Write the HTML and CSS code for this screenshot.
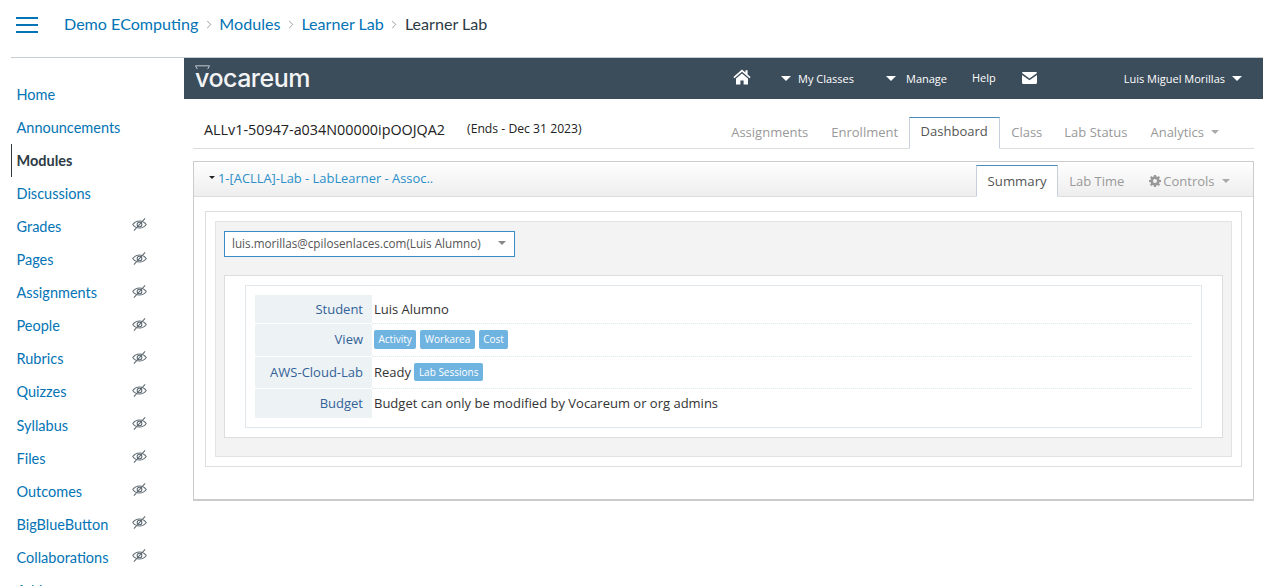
FILE: index.html
```html
<!DOCTYPE html>
<html lang="en">
<head>
    <meta charset="UTF-8">
    <title>Learner Lab</title>
    <link rel="stylesheet" href="styles.css">
</head>
<body>
    <!-- Canvas header -->
    <header class="top">
        <div class="burger"><span></span><span></span><span></span></div>
        <nav class="crumbs">
            <a>Demo EComputing</a>
            <svg class="sep" viewBox="0 0 6 10"><path d="M1 1l4 4-4 4" /></svg>
            <a>Modules</a>
            <svg class="sep" viewBox="0 0 6 10"><path d="M1 1l4 4-4 4" /></svg>
            <a>Learner Lab</a>
            <svg class="sep" viewBox="0 0 6 10"><path d="M1 1l4 4-4 4" /></svg>
            <span>Learner Lab</span>
        </nav>
    </header>

    <div class="layout">
        <!-- Course menu -->
        <ul class="side">
            <li><a>Home</a></li>
            <li><a>Announcements</a></li>
            <li class="active"><a>Modules</a></li>
            <li><a>Discussions</a></li>
            <li><a>Grades</a><svg class="eye"><use href="#eye-off" /></svg></li>
            <li><a>Pages</a><svg class="eye"><use href="#eye-off" /></svg></li>
            <li><a>Assignments</a><svg class="eye"><use href="#eye-off" /></svg></li>
            <li><a>People</a><svg class="eye"><use href="#eye-off" /></svg></li>
            <li><a>Rubrics</a><svg class="eye"><use href="#eye-off" /></svg></li>
            <li><a>Quizzes</a><svg class="eye"><use href="#eye-off" /></svg></li>
            <li><a>Syllabus</a><svg class="eye"><use href="#eye-off" /></svg></li>
            <li><a>Files</a><svg class="eye"><use href="#eye-off" /></svg></li>
            <li><a>Outcomes</a><svg class="eye"><use href="#eye-off" /></svg></li>
            <li><a>BigBlueButton</a><svg class="eye"><use href="#eye-off" /></svg></li>
            <li><a>Collaborations</a><svg class="eye"><use href="#eye-off" /></svg></li>
            <li><a>Add-ons</a></li>
        </ul>

        <main class="frame">
            <!-- Vocareum navbar -->
            <div class="navbar">
                <div class="logo">
                    <svg class="logo-mark" viewBox="0 0 16 5"><path d="M0.5 0.7h15M0.5 0.7l2 3.5M15.5 0.7l-2 3.5" /></svg>
                    <span>vocareum</span>
                </div>
                <svg class="home" viewBox="0 0 18 16"><path d="M9 .6L.4 8l1 1.2L9 2.8l7.6 6.4 1-1.2-3-2.6V1.2h-2.2v2.2zM3 9.6V15.6h4.4v-4.2h3.2v4.2H15V9.6L9 4.4z" /></svg>
                <div class="nav-item my-classes"><i class="caret"></i>My Classes</div>
                <div class="nav-item manage"><i class="caret"></i>Manage</div>
                <div class="nav-item help">Help</div>
                <svg class="mail" viewBox="0 0 15 12"><path d="M1.2 0h12.6c.6 0 1.2.5 1.2 1.1L7.5 6.6 0 1.1C0 .5.6 0 1.2 0zM0 2.9l7.5 5.4L15 2.9v7.9c0 .7-.5 1.2-1.2 1.2H1.2C.5 12 0 11.500 0 10.800z" /></svg>
                <div class="nav-item user">Luis Miguel Morillas<i class="caret after"></i></div>
            </div>

            <div class="title-row">
                <div class="course">ALLv1-50947-a034N00000ipOOJQA2</div>
                <div class="ends">(Ends - Dec 31 2023)</div>
                <ul class="tabs">
                    <li>Assignments</li>
                    <li class="enrollment">Enrollment</li>
                    <li class="on">Dashboard</li>
                    <li>Class</li>
                    <li class="lab-status">Lab Status</li>
                    <li>Analytics<i class="caret small"></i></li>
                </ul>
            </div>

            <section class="panel">
                <div class="panel-head">
                    <i class="caret tiny"></i>
                    <a class="lab-name">1-[ACLLA]-Lab - LabLearner - Assoc..</a>
                    <ul class="tabs sub">
                        <li class="on">Summary</li>
                        <li class="lab-time">Lab Time</li>
                        <li>
                            <svg class="gear" viewBox="0 0 12 12"><path fill-rule="evenodd" d="M5 0h2l.3 1.600 1 .4L9.700 1.100l1.300 1.300-1 1.300.5 1.100L12 5v2l-1.600.3-.4 1 1 1.400-1.300 1.300-1.400-1-1 .4L7 12H5l-.3-1.600-1-.4-1.400 1L1 9.700l1-1.400-.4-1L0 7V5l1.600-.3.4-1-1-1.300L2.300 1.100l1.400.9 1-.4zM6 4a2 2 0 1 0 0 4 2 2 0 0 0 0-4z" /></svg>Controls<i class="caret small"></i>
                        </li>
                    </ul>
                </div>

                <div class="panel-body">
                    <div class="outer">
                        <div class="well">
                            <div class="picker">
                                <span>luis.morillas@cpilosenlaces.com(Luis Alumno)</span>
                                <i class="caret small"></i>
                            </div>
                            <div class="card">
                                <div class="card-inner">
                                    <table class="info">
                                        <tr class="r1">
                                            <th>Student</th>
                                            <td>Luis Alumno</td>
                                        </tr>
                                        <tr class="r2">
                                            <th>View</th>
                                            <td><span class="tag">Activity</span><span class="tag">Workarea</span><span class="tag">Cost</span></td>
                                        </tr>
                                        <tr class="r3">
                                            <th>AWS-Cloud-Lab</th>
                                            <td>Ready <span class="tag short">Lab Sessions</span></td>
                                        </tr>
                                        <tr class="r4">
                                            <th>Budget</th>
                                            <td>Budget can only be modified by Vocareum or org admins</td>
                                        </tr>
                                    </table>
                                </div>
                            </div>
                        </div>
                    </div>
                </div>
            </section>
        </main>
    </div>

    <!-- Shared eye icon -->
    <svg class="defs" width="0" height="0">
        <symbol id="eye-off" viewBox="0 0 16 16">
            <path d="M.8 8c1.900-2.600 4.300-3.800 7.200-3.800s5.300 1.200 7.200 3.800c-1.900 2.600-4.300 3.800-7.200 3.800S2.700 10.600.8 8z" />
            <circle cx="8" cy="8" r="2.500" />
            <path d="M2 14.500L14 1.500" />
        </symbol>
    </svg>
</body>
</html>
```

FILE: styles.css
```css
/* Base */
html, body {
    margin: 0;
    padding: 0;
    height: 100%;
    overflow: hidden;
    background: #fff;
    font-family: Lato, "Liberation Sans", sans-serif;
    color: #2d3b45;
}

ul {
    list-style: none;
    margin: 0;
    padding: 0;
}

.defs {
    position: absolute;
}

/* Canvas header */
.top {
    display: flex;
    align-items: center;
    height: 58px;
    margin: 0 22px 0 11px;
    padding-left: 5px;
    padding-bottom: 10px;
    box-sizing: border-box;
    border-bottom: 1px solid #c7cdd1;
}

.burger {
    display: flex;
    flex-direction: column;
    gap: 5.500px;
    width: 22px;
    margin-top: 3px;
    margin-right: 26px;
}

.burger span {
    display: block;
    height: 1.500px;
    background: #0374b5;
}

.crumbs {
    display: flex;
    align-items: center;
    font-size: 16.100px;
    line-height: 20px;
}

.crumbs a {
    color: #0374b5;
}

.sep {
    width: 6px;
    height: 9px;
    margin: 2px 7.500px 0;
}

.sep path {
    fill: none;
    stroke: #8b969e;
    stroke-width: 1;
}

/* Course menu */
.layout {
    display: flex;
}

.side {
    width: 173px;
    margin-left: 11px;
    padding-top: 19.550px;
    flex: none;
}

.side li {
    display: flex;
    align-items: center;
    justify-content: space-between;
    height: 33.100px;
    padding: 0 37px 0 5.500px;
    font-size: 14.500px;
    color: #0374b5;
}

.side li.active {
    color: #2d3b45;
    font-weight: 700;
    border-left: 1px solid #2d3b45;
    padding-left: 4.500px;
}

.eye {
    width: 15px;
    height: 15px;
    margin-top: -3px;
}

#eye-off path, #eye-off circle {
    fill: none;
    stroke: #5f6b73;
    stroke-width: 1.100;
}

/* Vocareum frame */
.frame {
    width: 1079px;
    flex: none;
    font-family: "Open Sans", "Liberation Sans", sans-serif;
}

.navbar {
    display: flex;
    align-items: center;
    height: 41px;
    background: #3b4c5b;
    color: #fff;
    font-size: 11px;
}

.logo {
    position: relative;
    margin-left: 11px;
    width: 538px;
    font-family: Inter, "Open Sans", sans-serif;
    font-size: 25px;
    font-weight: 500;
    letter-spacing: -0.500px;
    line-height: 24px;
    color: #f2f4f5;
    margin-top: -2px;
    flex: none;
}

.logo-mark {
    position: absolute;
    left: 0;
    top: -1px;
    width: 15px;
    height: 5px;
}

.logo-mark path {
    fill: none;
    stroke: #c9d0d5;
    stroke-width: 1;
}

.home {
    width: 18px;
    height: 16px;
    margin-top: -4px;
    fill: #fff;
    flex: none;
}

.nav-item {
    display: flex;
    align-items: center;
    white-space: nowrap;
}

.my-classes {
    margin-left: 30px;
}

.manage {
    margin-left: 32px;
}

.manage .caret {
    margin-right: 10px;
}

.help {
    margin-left: 25px;
    margin-top: -2px;
}

.mail {
    width: 15px;
    height: 12px;
    margin-left: 26px;
    margin-top: -1px;
    fill: #fff;
    flex: none;
}

.user {
    margin-left: auto;
    margin-right: 21px;
}

.caret {
    display: inline-block;
    width: 0;
    height: 0;
    margin-right: 7px;
    border-left: 5px solid transparent;
    border-right: 5px solid transparent;
    border-top: 5px solid #fff;
}

.caret.after {
    margin: 0 0 0 7px;
}

.caret.small {
    margin: 0 0 0 7px;
    border-left-width: 4px;
    border-right-width: 4px;
    border-top: 4px solid #aaa;
}

.caret.tiny {
    margin: 0 3px 3px 1px;
    border-left-width: 3px;
    border-right-width: 3px;
    border-top: 3px solid #222;
}

/* Course row and tabs */
.title-row {
    display: flex;
    align-items: flex-end;
    height: 50px;
    margin: 0 9px;
    border-bottom: 1px solid #ddd;
    box-sizing: border-box;
}

.course {
    font-size: 14.350px;
    color: #222;
    margin-left: 11px;
    margin-bottom: 9px;
}

.ends {
    font-size: 12.200px;
    color: #222;
    margin-left: 22px;
    margin-bottom: 11px;
}

.tabs {
    display: flex;
    margin-left: auto;
    margin-right: 23.500px;
    margin-bottom: -1px;
    font-size: 13px;
    color: #999;
}

.tabs li {
    display: flex;
    align-items: center;
    height: 32px;
    padding: 0 10.500px 3px;
    box-sizing: border-box;
    border: 1px solid transparent;
    white-space: nowrap;
}

.tabs li.enrollment {
    padding-right: 9.500px;
}

.tabs li.lab-status {
    padding-left: 9.500px;
}

.tabs li.on {
    padding: 0 11px 4px;
    color: #555;
    background: #fff;
    border-color: #c5d0dc;
    border-top-color: #4a8cb8;
    border-bottom-color: #fff;
}

/* Panel */
.panel {
    margin: 12px 9px 0;
    border: 1px solid #ccc;
    border-bottom-width: 2px;
}

.panel-head {
    display: flex;
    align-items: center;
    height: 35px;
    padding-left: 14px;
    box-sizing: border-box;
    background: linear-gradient(#fff, #eee);
    border-bottom: 1px solid #ddd;
}

.lab-name {
    font-size: 12.900px;
    color: #2a8fc9;
    margin-top: -2px;
}

.tabs.sub {
    margin-right: 11px;
    align-self: flex-end;
}

.tabs.sub li {
    padding: 0 11.500px;
}

.tabs.sub li.on {
    padding: 0 10.500px;
    font-size: 13.200px;
}

.tabs.sub li.lab-time {
    padding-left: 10px;
}

.gear {
    width: 12px;
    height: 12px;
    margin-right: 2px;
    fill: #999;
}

.panel-body {
    padding: 14px 11px 32px;
}

.outer {
    padding: 9px;
    border: 1px solid #ddd;
}

.well {
    padding: 9px 8px 18px;
    background: #f3f3f3;
    border: 1px solid #e3e3e3;
}

.picker {
    display: flex;
    align-items: center;
    justify-content: space-between;
    width: 291px;
    height: 26px;
    padding: 0 8px 2px 7px;
    box-sizing: border-box;
    background: #fff;
    border: 1px solid #3a8cc9;
    font-size: 11.700px;
    color: #555;
}

.picker .caret.small {
    border-top-color: #888;
}

.card {
    margin-top: 18px;
    padding: 9px 20px;
    background: #fff;
    border: 1px solid #ddd;
}

.card-inner {
    padding: 9px;
    border: 1px solid #e1e8ed;
}

/* Student info table */
.info {
    width: 100%;
    border-collapse: collapse;
    font-size: 13px;
    color: #333;
}

.info th {
    width: 108px;
    padding: 0 9px 0 0;
    text-align: right;
    font-weight: 400;
    color: #336199;
    background: #edf3f4;
    border-top: 1px solid #fff;
}

.info td {
    padding: 0 0 0 2px;
    border-top: 1px dotted #dce9ef;
}

.info tr:first-child th, .info tr:first-child td {
    border-top: 0;
}

.r1 {
    height: 28px;
}

.r2 {
    height: 33px;
}

.r2 th, .r2 td {
    padding-bottom: 2px;
}

.r3 {
    height: 32px;
}

.r4 {
    height: 30px;
}

.tag {
    display: inline-block;
    margin-right: 4px;
    padding: 0 4.500px;
    height: 19px;
    line-height: 19px;
    border-radius: 2px;
    background: #6fb3e0;
    color: #fff;
    font-size: 10px;
    vertical-align: middle;
}

.tag.short {
    height: 18px;
    line-height: 18px;
    margin-top: -2px;
}
```
